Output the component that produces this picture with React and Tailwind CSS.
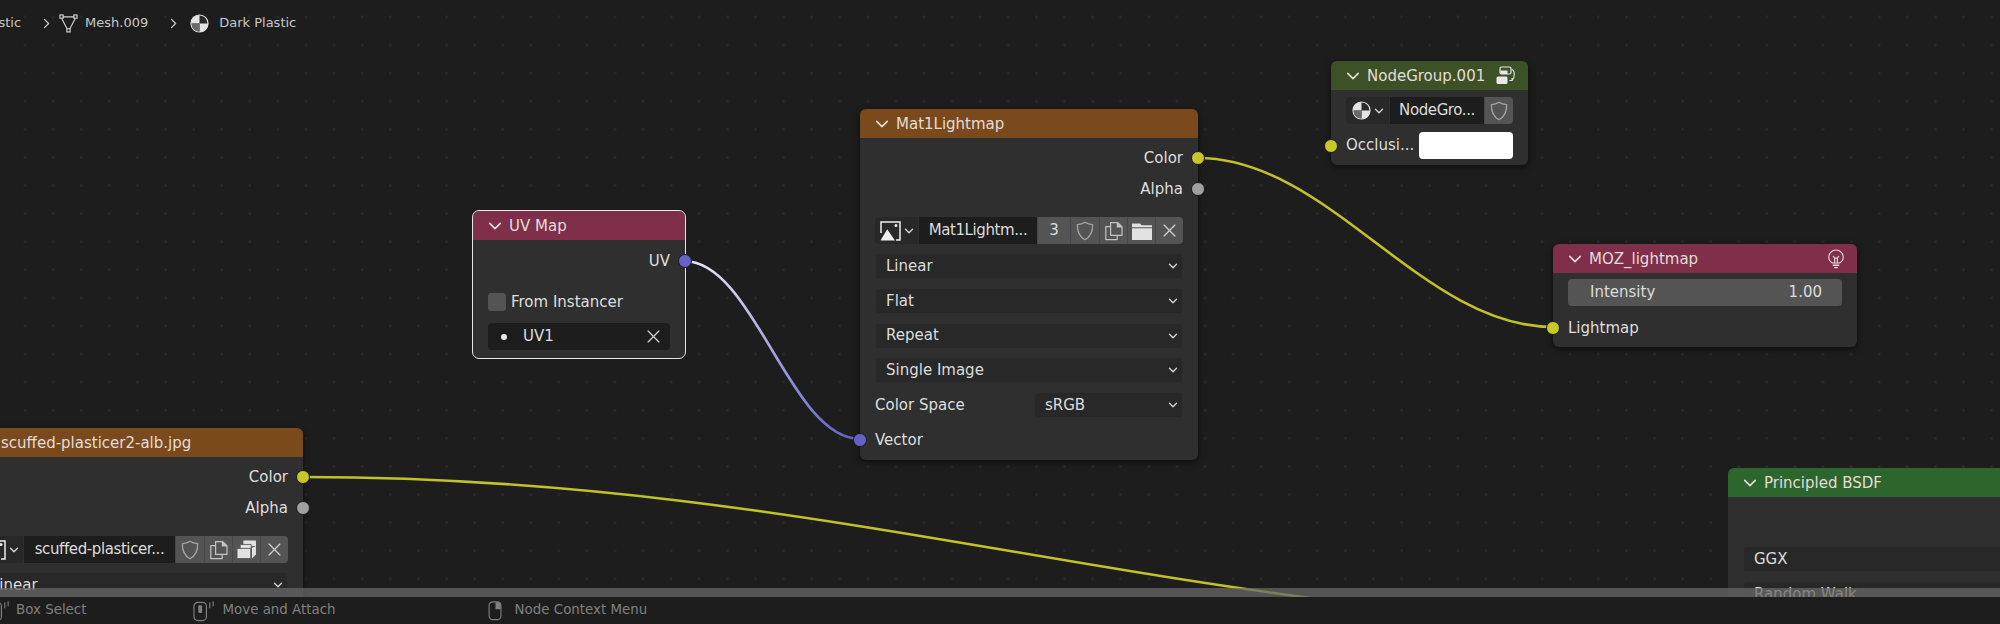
const Chevron = ({ className = 'w-[12px] h-[12px] text-[#d4d4d4]' }) => (
  <svg viewBox="0 0 12 12" className={className} fill="none" stroke="currentColor" strokeWidth="1.4" strokeLinecap="round" strokeLinejoin="round">
    <path d="M1.5 3.8 6 8.3l4.5-4.5" />
  </svg>
);

const Caret = () => (
  <svg viewBox="0 0 10 10" className="w-[10px] h-[10px] text-[#d8d8d8]" fill="none" stroke="currentColor" strokeWidth="1.3" strokeLinecap="round" strokeLinejoin="round">
    <path d="M1.5 3.2 5 6.7l3.5-3.5" />
  </svg>
);

const CloseIcon = ({ className = 'w-[13px] h-[13px] text-[#d0d0d0]' }) => (
  <svg viewBox="0 0 12 12" className={className} fill="none" stroke="currentColor" strokeWidth="1.2" strokeLinecap="round">
    <path d="M1 1l10 10M11 1 1 11" />
  </svg>
);

const ShieldIcon = () => (
  <svg viewBox="0 0 20 20" className="w-[20px] h-[20px] text-[#a4a4a4]" fill="none" stroke="currentColor" strokeWidth="1.3" strokeLinejoin="round">
    <path d="M10 1.3c2 1.4 4.6 2.2 7.6 2.4.3 6.5-1.6 11.6-7.6 15-6-3.4-7.9-8.5-7.6-15 3-.2 5.6-1 7.6-2.4z" />
  </svg>
);

const CopyIcon = () => (
  <svg viewBox="0 0 20 20" className="w-[20px] h-[20px] text-[#c4c4c4]" fill="none" stroke="currentColor" strokeWidth="1.2" strokeLinejoin="round">
    <path d="M6.6 14.4V1.6h7.2l4.2 4v8.8z" />
    <path d="M13.4 1.6v4.4h4.6" fill="currentColor" />
    <path d="M6.4 5.6H1.8v13h11.4v-4" />
  </svg>
);

const FolderIcon = () => (
  <svg viewBox="0 0 20 20" className="w-[20px] h-[20px] text-[#e2e2e2]" fill="currentColor">
    <path d="M0 2.5h8l1.6 1.8H20v2H0z" />
    <path d="M0 7.2h20V19H0z" />
  </svg>
);

const StackIcon = () => (
  <svg viewBox="0 0 20 20" className="w-[21px] h-[21px] text-[#e2e2e2]" fill="currentColor">
    <path d="M7 1.5h12v5.2H7z" />
    <path d="M4 5.2h10.5v4.6H4z" stroke="#555" strokeWidth="0.8" />
    <path d="M1 9h13v9.6H1z" stroke="#555" strokeWidth="0.8" />
    <path d="M15.2 8.3 19 6.6v8L15.2 18.6z" />
  </svg>
);

const ImageIcon = () => (
  <svg viewBox="0 0 21 20" className="w-[21px] h-[20px]" fill="none">
    <path d="M1 12V1h19v18h-4" stroke="#eeeeee" strokeWidth="1.5" />
    <path d="M0.5 19.5 7.200 8.200 15 19.500z" fill="#eeeeee" />
    <circle cx="16" cy="4.500" r="1.500" fill="#eeeeee" />
  </svg>
);

const MaterialIcon = ({ className = 'w-[19px] h-[19px]' }) => (
  <svg viewBox="0 0 20 20" className={className}>
    <circle cx="10" cy="10" r="9" fill="#2a2a2a" stroke="#e4e4e4" strokeWidth="1.2" />
    <path d="M10 10V1a9 9 0 0 0-9 9z" fill="#e4e4e4" />
    <path d="M10 10v9a9 9 0 0 0 9-9z" fill="#e4e4e4" />
    <path d="M10 10H1.6a8.4 8.4 0 0 0 8.4 8.4z" fill="#6a6a6a" />
  </svg>
);

const MeshIcon = () => (
  <svg viewBox="0 0 20 20" className="w-[19px] h-[19px] text-[#d4d4d4]" fill="none" stroke="currentColor" strokeWidth="1.2">
    <path d="M4 3h12M3 5l5.5 10.5M17 5l-5.5 10.5" />
    <rect x="1" y="1" width="3.4" height="3.4" />
    <rect x="15.6" y="1" width="3.4" height="3.4" />
    <rect x="8.3" y="15.5" width="3.4" height="3.4" />
  </svg>
);

const BulbIcon = () => (
  <svg viewBox="0 0 20 22" className="w-[18px] h-[20px] text-[#e8dfe2]" fill="none" stroke="currentColor" strokeWidth="1.2" strokeLinecap="round">
    <path d="M6 15.5C3.5 14 2 11.8 2 9a8 8 0 0 1 16 0c0 2.8-1.5 5-4 6.5z" />
    <path d="M7 8l1.5 2h3L13 8M8.5 10v5M11.5 10v5" />
    <path d="M7 18h6" strokeWidth="1.6" />
    <path d="M8.5 20.5h3" strokeWidth="1.4" />
  </svg>
);

const GroupSwapIcon = () => (
  <svg viewBox="0 0 20 20" className="w-[20px] h-[20px] text-[#e8e8e8]">
    <rect x="4" y="1" width="11" height="7" rx="1.5" fill="none" stroke="currentColor" strokeWidth="1.2" />
    <rect x="0.5" y="10.5" width="11" height="7.5" rx="1.5" fill="currentColor" />
    <rect x="4.5" y="4.5" width="7" height="3.5" fill="currentColor" />
    <path d="M16 3.5c3 1 3 8.500 0 11M13.500 14.500H16v-2.500" fill="none" stroke="currentColor" strokeWidth="1.1" />
  </svg>
);

const MouseRight = () => (
  <svg viewBox="0 0 16 22" className="w-[15px] h-[20px] text-[#808080]" fill="none" stroke="currentColor" strokeWidth="1.2">
    <rect x="1" y="1" width="13" height="19.500" rx="4" />
    <path d="M8 1.500h3.500a2.500 2.500 0 0 1 2 2.500v5H8z" fill="currentColor" stroke="none" />
  </svg>
);

const MouseMiddle = () => (
  <svg viewBox="0 0 24 22" className="w-[23px] h-[22px] text-[#808080]" fill="none" stroke="currentColor" strokeWidth="1.200">
    <rect x="1" y="2" width="13" height="19" rx="4" />
    <rect x="5.500" y="5" width="4" height="8" rx="1" fill="currentColor" stroke="none" />
    <path d="M17.500 2v6M21 1v5" />
  </svg>
);

const Socket = ({ side, color }) => (
  <span className={`absolute top-1/2 -translate-y-1/2 w-[14px] h-[14px] rounded-full border border-[#1c1c1c] ${color} ${side === 'left' ? 'left-[-7px]' : 'right-[-7px]'}`} />
);

const Select = ({ label, className = 'mx-[15px]' }) => (
  <div className={`flex items-center justify-between h-[26px] pl-[10px] pr-[4px] rounded-[4px] bg-[#282828] border border-[#2e2e2e] text-[#dcdcdc] ${className}`}>
    <span>{label}</span>
    <Caret />
  </div>
);

const Output = ({ label, color }) => (
  <div className="relative flex items-center justify-end h-[26px] pr-[15px] text-[#dedede]">
    {label}
    <Socket side="right" color={color} />
  </div>
);

const Btn = ({ children, className = 'w-[28px]' }) => (
  <div className={`flex items-center justify-center h-full bg-[#545454] border-l border-[#474747] ${className}`}>{children}</div>
);

const Header = ({ title, color, right }) => (
  <div className={`flex items-center h-[29px] pl-[15px] pr-[12px] pt-[1px] rounded-t-[6px] text-[#e4dcd8] ${color}`}>
    <Chevron className="w-[14px] h-[14px] text-[#e4dcd8] mr-[7px]" />
    <span className="flex-1 whitespace-nowrap">{title}</span>
    {right}
  </div>
);

const ImageNode = ({ className, title, name, users, last }) => (
  <div className={`absolute w-[338px] rounded-[6px] bg-[#2f2f2f] shadow-[0_2px_6px_rgba(0,0,0,0.6)] ${className}`}>
    <Header title={title} color="bg-[#7a4a1d]" />
    <div className="flex flex-col pt-[7px] pb-[7px]">
      <div className="flex flex-col gap-[5px]">
        <Output label="Color" color="bg-[#c7c729]" />
        <Output label="Alpha" color="bg-[#a1a1a1]" />
      </div>
      <div className="flex items-stretch h-[27px] mx-[15px] mt-[15px] mb-[9px] rounded-[4px] overflow-hidden">
        <div className="flex items-center justify-center gap-[3px] w-[43px] bg-[#282828]">
          <ImageIcon />
          <Caret />
        </div>
        <div className="flex-1 flex items-center justify-center min-w-0 ml-[1px] bg-[#1d1d1d] tracking-[-0.4px] text-[#dcdcdc] whitespace-nowrap">{name}</div>
        {users && <Btn className="w-[33px] text-[#dcdcdc]">{users}</Btn>}
        <Btn className="w-[29px]"><ShieldIcon /></Btn>
        <Btn><CopyIcon /></Btn>
        <Btn>{last}</Btn>
        <Btn><CloseIcon /></Btn>
      </div>
      <div className="flex flex-col gap-[8.75px]">
        <Select label="Linear" />
        <Select label="Flat" />
        <Select label="Repeat" />
        <Select label="Single Image" />
        <div className="flex items-center h-[26px] mx-[15px] text-[#dedede]">
          <span className="w-[159px]">Color Space</span>
          <Select label="sRGB" className="flex-1" />
        </div>
        <div className="relative flex items-center h-[26px] pl-[15px] text-[#dedede]">
          Vector
          <Socket side="left" color="bg-[#6363c7]" />
        </div>
      </div>
    </div>
  </div>
);

const Wires = () => (
  <svg className="absolute inset-0 w-[2000px] h-[597px]" viewBox="0 0 2000 597" fill="none">
    <defs>
      <linearGradient id="uvWire" gradientUnits="userSpaceOnUse" x1="684" y1="261" x2="860" y2="439">
        <stop offset="0" stopColor="#ecebf7" />
        <stop offset="1" stopColor="#5d5dc6" />
      </linearGradient>
    </defs>
    <path d="M684 261C754 261 790 439 860 439" stroke="url(#uvWire)" strokeWidth="2.600" />
    <path d="M1198 158C1329 158 1422 327 1553 327" stroke="#c1c12a" strokeWidth="2.600" />
    <path d="M303 477C843 477 1189 627 1729 627" stroke="#c1c12a" strokeWidth="2.600" />
  </svg>
);

const Breadcrumb = () => (
  <div className="absolute left-[-21px] top-[13px] flex items-center h-[20px] text-[13px] text-[#c8c8c8] whitespace-nowrap">
    <span>Plastic</span>
    <Chevron className="w-[11px] h-[11px] text-[#c8c8c8] -rotate-90 ml-[20px] mr-[7px]" />
    <MeshIcon />
    <span className="ml-[7px] mr-[20px]">Mesh.009</span>
    <Chevron className="w-[11px] h-[11px] text-[#c8c8c8] -rotate-90 mr-[11px]" />
    <MaterialIcon />
    <span className="ml-[10px]">Dark Plastic</span>
  </div>
);

const StatusBar = () => (
  <div className="flex items-center h-[27px] bg-[#1d1d1d] text-[13.4px] text-[#808080] whitespace-nowrap overflow-hidden">
    <div className="ml-[-12px] w-[16px] shrink-0"><MouseMiddle /></div>
    <span className="ml-[12px]">Box Select</span>
    <div className="ml-[107px]"><MouseMiddle /></div>
    <span className="ml-[6px]">Move and Attach</span>
    <div className="ml-[152px]"><MouseRight /></div>
    <span className="ml-[12px]">Node Context Menu</span>
  </div>
);

export default function App() {
  return (
    <div className="flex flex-col w-[2000px] h-[624px] overflow-hidden bg-[#1d1d1d] font-['DejaVu_Sans',sans-serif] text-[15px]">
      <div className="relative h-[597px] overflow-hidden bg-[#1d1d1d] bg-[radial-gradient(circle,#2a2a2a_1px,transparent_1.6px)] bg-[size:28.1px_28.1px] bg-[position:11px_31px]">
        <Wires />
        <Breadcrumb />

        {/* UV Map, selected */}
        <div className="absolute left-[473px] top-[211px] w-[212px] rounded-[6px] bg-[#2f2f2f] outline outline-[1.5px] outline-[#e6e6e6]">
          <Header title="UV Map" color="bg-[#7f2f49]" />
          <div className="flex flex-col pt-[8px] pb-[8px]">
            <Output label="UV" color="bg-[#6363c7]" />
            <div className="flex items-center h-[22px] mx-[15px] mt-[17px] text-[#dedede]">
              <span className="w-[18px] h-[18px] mr-[5px] rounded-[3px] bg-[#545454]" />
              From Instancer
            </div>
            <div className="flex items-center h-[27px] mx-[15px] mt-[10px] pl-[13px] pr-[10px] rounded-[4px] bg-[#1d1d1d] text-[#dcdcdc]">
              <span className="w-[6px] h-[6px] rounded-full bg-[#e8e8e8] mr-[16px]" />
              <span className="flex-1">UV1</span>
              <CloseIcon />
            </div>
          </div>
        </div>

        <ImageNode className="left-[860px] top-[109px]" title="Mat1Lightmap" name="Mat1Lightm..." users="3" last={<FolderIcon />} />
        <ImageNode className="left-[-35px] top-[428px]" title="scuffed-plasticer2-alb.jpg" name="scuffed-plasticer..." last={<StackIcon />} />

        {/* NodeGroup.001 */}
        <div className="absolute left-[1331px] top-[61px] w-[197px] rounded-[6px] bg-[#2f2f2f] shadow-[0_2px_6px_rgba(0,0,0,0.6)]">
          <Header title="NodeGroup.001" color="bg-[#3d5127]" right={<GroupSwapIcon />} />
          <div className="flex flex-col pt-[7px] pb-[6px] gap-[8px]">
            <div className="flex items-stretch h-[27px] mx-[15px] rounded-[4px] overflow-hidden">
              <div className="flex items-center justify-center gap-[3px] w-[43px] bg-[#282828]">
                <MaterialIcon />
                <Caret />
              </div>
              <div className="flex-1 flex items-center justify-center ml-[1px] bg-[#1d1d1d] tracking-[-0.4px] text-[#dcdcdc] whitespace-nowrap">NodeGro...</div>
              <Btn className="w-[29px]"><ShieldIcon /></Btn>
            </div>
            <div className="relative flex items-center h-[27px] px-[15px] text-[#dedede]">
              <Socket side="left" color="bg-[#c7c729]" />
              <span className="flex-1">Occlusi...</span>
              <span className="w-[94px] h-[27px] rounded-[4px] bg-white" />
            </div>
          </div>
        </div>

        {/* MOZ_lightmap */}
        <div className="absolute left-[1553px] top-[244px] w-[304px] rounded-[6px] bg-[#2f2f2f] shadow-[0_2px_6px_rgba(0,0,0,0.6)]">
          <Header title="MOZ_lightmap" color="bg-[#7f2f49]" right={<BulbIcon />} />
          <div className="flex flex-col pt-[6px] pb-[6px] gap-[9px]">
            <div className="flex items-center justify-between h-[27px] mx-[15px] pl-[22px] pr-[20px] rounded-[4px] bg-[#545454] text-[#dcdcdc]">
              <span>Intensity</span>
              <span>1.00</span>
            </div>
            <div className="relative flex items-center h-[26px] pl-[15px] text-[#dedede]">
              Lightmap
              <Socket side="left" color="bg-[#c7c729]" />
            </div>
          </div>
        </div>

        {/* Principled BSDF */}
        <div className="absolute left-[1728px] top-[468px] w-[338px] rounded-[6px] bg-[#2f2f2f]">
          <Header title="Principled BSDF" color="bg-[#2c662c]" />
          <div className="flex flex-col pt-[49px] gap-[9px]">
            <Select label="GGX" />
            <Select label="Random Walk" />
          </div>
        </div>

        {/* area splitter lies over the node canvas */}
        <div className="absolute left-0 right-0 bottom-0 h-[9px] bg-[#676767]/75" />
      </div>
      <StatusBar />
    </div>
  );
}
